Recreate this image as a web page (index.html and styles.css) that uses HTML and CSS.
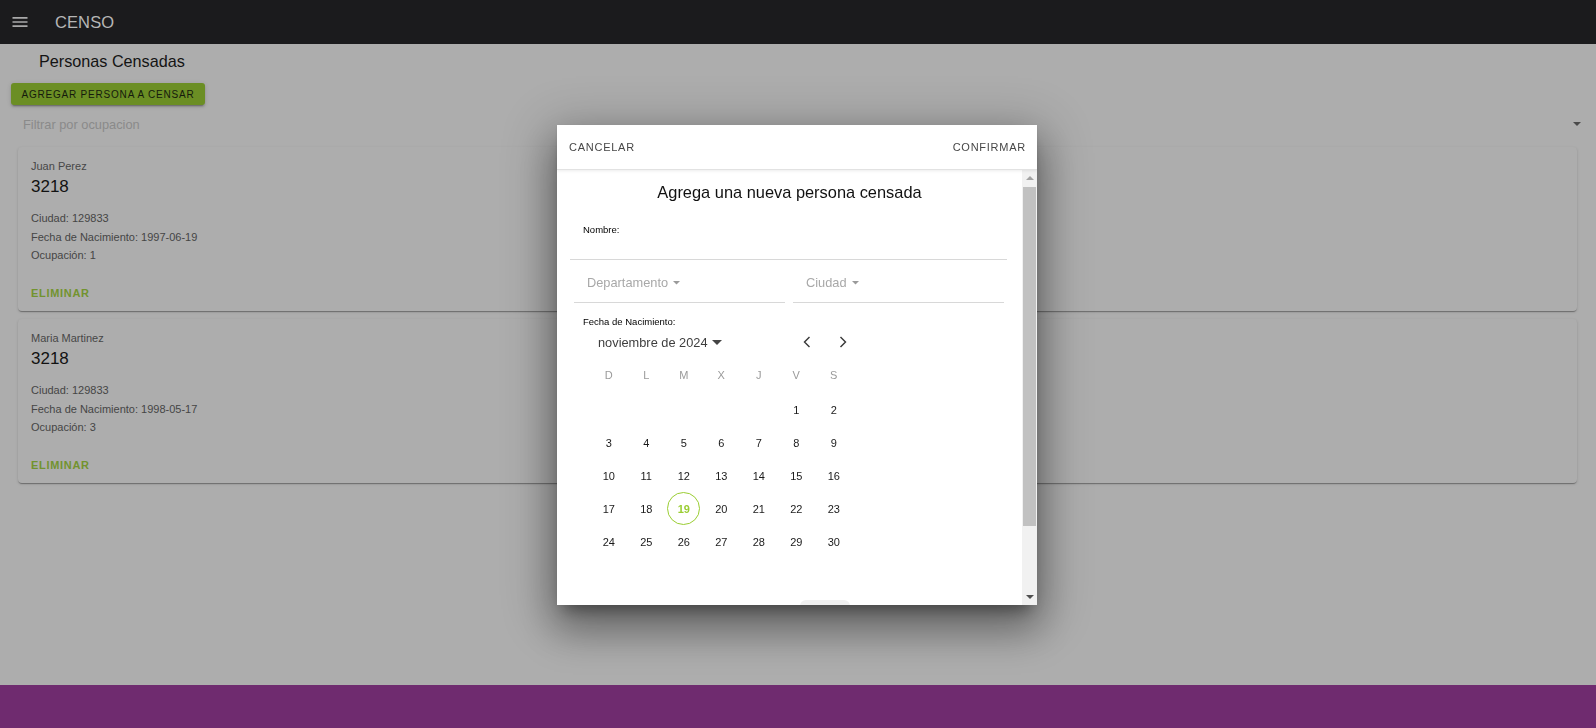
FILE: index.html
```
<!DOCTYPE html>
<html lang="es">
<head>
<meta charset="utf-8">
<title>CENSO</title>
<link rel="stylesheet" href="styles.css">
</head>
<body>
<header class="appbar">
  <svg class="menu-icon" viewBox="0 0 24 24" width="20" height="20"><path d="M3 18h18v-2H3zm0-5h18v-2H3zm0-7v2h18V6z"/></svg>
  <span class="app-title">CENSO</span>
</header>

<main class="page">
  <h2 class="page-title">Personas Censadas</h2>
  <button class="add-btn">AGREGAR PERSONA A CENSAR</button>
  <div class="filter">
    <span class="filter-placeholder">Filtrar por ocupacion</span>
    <svg class="filter-arrow" viewBox="7 10 10 5" width="8" height="4"><path d="M7 10l5 5 5-5z"/></svg>
  </div>

  <section class="card">
    <div class="card-name">Juan Perez</div>
    <div class="card-number">3218</div>
    <div class="card-details">
      <div>Ciudad: 129833</div>
      <div>Fecha de Nacimiento: 1997-06-19</div>
      <div>Ocupación: 1</div>
    </div>
    <div class="card-action">ELIMINAR</div>
  </section>

  <section class="card">
    <div class="card-name">Maria Martinez</div>
    <div class="card-number">3218</div>
    <div class="card-details">
      <div>Ciudad: 129833</div>
      <div>Fecha de Nacimiento: 1998-05-17</div>
      <div>Ocupación: 3</div>
    </div>
    <div class="card-action">ELIMINAR</div>
  </section>
</main>

<div class="overlay">
  <div class="dialog">
    <div class="dialog-header">
      <span class="dlg-btn">CANCELAR</span>
      <span class="dlg-btn">CONFIRMAR</span>
    </div>
    <div class="dialog-body">
      <div class="dialog-content">
        <h3 class="dialog-title">Agrega una nueva persona censada</h3>
        <div class="field">
          <div class="field-label">Nombre:</div>
          <div class="field-input"></div>
        </div>
        <div class="select-row">
          <div class="select">
            <span>Departamento</span>
            <svg viewBox="7 10 10 5" width="7" height="3.5"><path d="M7 10l5 5 5-5z"/></svg>
          </div>
          <div class="select">
            <span>Ciudad</span>
            <svg viewBox="7 10 10 5" width="7" height="3.5"><path d="M7 10l5 5 5-5z"/></svg>
          </div>
        </div>
        <div class="field-label date-label">Fecha de Nacimiento:</div>
        <div class="calendar">
          <div class="cal-header">
            <div class="cal-month">
              <span>noviembre de 2024</span>
              <svg viewBox="7 10 10 5" width="10" height="5"><path d="M7 10l5 5 5-5z"/></svg>
            </div>
            <div class="cal-nav">
              <svg viewBox="0 0 24 24" width="20" height="20"><polyline points="15,6 9,12 15,18"/></svg>
              <svg viewBox="0 0 24 24" width="20" height="20"><polyline points="9,6 15,12 9,18"/></svg>
            </div>
          </div>
          <div class="cal-weekdays">
            <span>D</span><span>L</span><span>M</span><span>X</span><span>J</span><span>V</span><span>S</span>
          </div>
          <div class="cal-days">
            <span></span><span></span><span></span><span></span><span></span><span>1</span><span>2</span>
            <span>3</span><span>4</span><span>5</span><span>6</span><span>7</span><span>8</span><span>9</span>
            <span>10</span><span>11</span><span>12</span><span>13</span><span>14</span><span>15</span><span>16</span>
            <span>17</span><span>18</span><span class="today">19</span><span>20</span><span>21</span><span>22</span><span>23</span>
            <span>24</span><span>25</span><span>26</span><span>27</span><span>28</span><span>29</span><span>30</span>
          </div>
        </div>
        <div class="pill"></div>
      </div>
      <div class="scrollbar">
        <div class="sb-arrow sb-up"></div>
        <div class="sb-thumb"></div>
        <div class="sb-space"></div>
        <div class="sb-arrow sb-down"></div>
      </div>
    </div>
  </div>
</div>

<footer class="footer"></footer>
</body>
</html>
```

FILE: styles.css
```
* { box-sizing: border-box; }

html, body {
  margin: 0;
  padding: 0;
  height: 100%;
}

body {
  background: #adadad;
  font-family: "Liberation Sans", Arial, sans-serif;
  color: #1a1a1a;
  overflow: hidden;
}

/* App bar */
.appbar {
  height: 44px;
  background: #1b1b1d;
  display: flex;
  align-items: center;
  padding-left: 10px;
}
.menu-icon {
  fill: #a9a9a9;
}
.app-title {
  margin-left: 25px;
  font-size: 16.5px;
  color: #b6b6b6;
  letter-spacing: 0.1px;
}

/* Page */
.page {
  padding-top: 7px;
}
.page-title {
  margin: 0 0 0 39px;
  font-size: 16.2px;
  font-weight: normal;
  line-height: 20px;
  color: #141414;
}
.add-btn {
  display: block;
  margin: 12px 0 0 11px;
  width: 194px;
  height: 22px;
  padding: 0;
  border: none;
  border-radius: 3px;
  background: #6b8e24;
  color: #151a0c;
  font-family: "Liberation Sans", Arial, sans-serif;
  font-size: 10px;
  letter-spacing: 0.8px;
  box-shadow: 0 3px 1px -2px rgba(0,0,0,.2), 0 2px 2px 0 rgba(0,0,0,.14), 0 1px 5px 0 rgba(0,0,0,.12);
}
.filter {
  display: flex;
  align-items: center;
  justify-content: space-between;
  height: 24px;
  margin-top: 7px;
  padding: 0 15px 0 23px;
}
.filter-placeholder {
  font-size: 12.8px;
  color: #8a8a8a;
}
.filter-arrow {
  fill: #4a4a4a;
}

/* Cards */
.card {
  margin: 11px 19px 0 18px;
  height: 164px;
  padding: 12px 13px 0;
  border-radius: 4px;
  background: #adadad;
  box-shadow: 0 2px 1px -1px rgba(0,0,0,.2), 0 1px 1px 0 rgba(0,0,0,.14), 0 1px 3px 0 rgba(0,0,0,.12);
}
.card + .card {
  margin-top: 8px;
}
.card-name {
  font-size: 11px;
  line-height: 14px;
  color: #474747;
}
.card-number {
  margin-top: 3px;
  font-size: 17px;
  line-height: 22px;
  color: #121212;
}
.card-details {
  margin-top: 11px;
  font-size: 11px;
  line-height: 18.5px;
  color: #454545;
}
.card-action {
  margin-top: 21px;
  font-size: 11px;
  line-height: 14px;
  font-weight: bold;
  letter-spacing: 0.7px;
  color: #72932f;
}

/* Dialog */
.overlay {
  position: fixed;
  inset: 0;
  display: flex;
  align-items: center;
  justify-content: center;
  padding-right: 2px;
  padding-top: 2px;
}
.dialog {
  width: 480px;
  height: 480px;
  background: #fff;
  display: flex;
  flex-direction: column;
  box-shadow: 0 11px 15px -7px rgba(0,0,0,.38), 0 24px 38px 3px rgba(0,0,0,.28), 0 9px 46px 8px rgba(0,0,0,.24);
}
.dialog-header {
  height: 45px;
  flex: none;
  display: flex;
  align-items: center;
  justify-content: space-between;
  padding: 0 11px 0 12px;
  border-bottom: 1px solid #e2e2e2;
  box-shadow: 0 1px 3px rgba(0,0,0,.08);
  position: relative;
  z-index: 1;
}
.dlg-btn {
  font-size: 11px;
  letter-spacing: 0.75px;
  color: #474747;
}
.dialog-body {
  flex: 1;
  display: flex;
  min-height: 0;
}
.dialog-content {
  flex: 1;
  overflow: hidden;
}
.dialog-title {
  margin: 12px 0 0;
  text-align: center;
  font-size: 16.4px;
  font-weight: normal;
  line-height: 20px;
  color: #111;
}
.field {
  margin: 22px 15px 0 13px;
}
.field-label {
  font-size: 9.5px;
  line-height: 12px;
  color: #000;
  padding-left: 13px;
}
.field-input {
  height: 24px;
  border-bottom: 1px solid #d8d8d8;
}
.select-row {
  display: flex;
  gap: 8px;
  margin: 13px 0 0 17px;
}
.select {
  width: 211px;
  height: 30px;
  padding: 0 0 10px 13px;
  display: flex;
  align-items: center;
  gap: 5px;
  border-bottom: 1px solid #d8d8d8;
  font-size: 12.8px;
  line-height: 20px;
  color: #a8a8a8;
}
.select svg {
  fill: #9a9a9a;
  margin-top: 1px;
}
.date-label {
  margin: 13px 0 0 26px;
  padding-left: 0;
}

/* Calendar */
.calendar {
  margin-left: 33px;
  width: 265px;
}
.cal-header {
  height: 28px;
  display: flex;
  align-items: center;
  justify-content: space-between;
}
.cal-month {
  margin-left: 8px;
  display: flex;
  align-items: center;
  gap: 4px;
  font-size: 12.8px;
  color: #3e3e3e;
}
.cal-month svg {
  fill: #444;
}
.cal-nav {
  display: flex;
  gap: 16px;
  padding-right: 2px;
}
.cal-nav svg {
  fill: none;
  stroke: #3a3a3a;
  stroke-width: 1.7;
}
.cal-weekdays,
.cal-days {
  display: grid;
  grid-template-columns: repeat(7, 37.5px);
}
.cal-weekdays {
  margin-top: 7px;
  height: 24px;
  align-items: center;
  font-size: 11px;
  color: #9a9a9a;
  text-align: center;
}
.cal-days {
  margin-top: 6px;
  grid-auto-rows: 33px;
  font-size: 11px;
  color: #1a1a1a;
}
.cal-days span {
  display: flex;
  align-items: center;
  justify-content: center;
}
.cal-days .today {
  width: 33px;
  height: 33px;
  margin: 0 auto;
  border: 1px solid #9acd32;
  border-radius: 50%;
  color: #9acd32;
  font-weight: bold;
}
.pill {
  margin: 42px 0 0 243px;
  width: 50px;
  height: 12px;
  border-radius: 6px;
  background: #efefef;
}

/* Fake scrollbar */
.scrollbar {
  width: 15px;
  flex: none;
  background: #f1f1f1;
  display: flex;
  flex-direction: column;
  align-items: center;
  padding-bottom: 6px;
}
.sb-arrow {
  width: 0;
  height: 0;
  border-left: 4px solid transparent;
  border-right: 4px solid transparent;
}
.sb-up {
  margin-top: 6px;
  border-bottom: 4px solid #a3a3a3;
}
.sb-down {
  border-top: 4px solid #505050;
}
.sb-thumb {
  margin-top: 7px;
  width: 13px;
  height: 339px;
  background: #c1c1c1;
  margin-right: 1px;
}
.sb-space {
  flex: 1;
}

/* Footer */
.footer {
  position: fixed;
  left: 0;
  right: 0;
  bottom: 0;
  height: 43px;
  background: #6f2b6f;
  z-index: 2;
}
```
